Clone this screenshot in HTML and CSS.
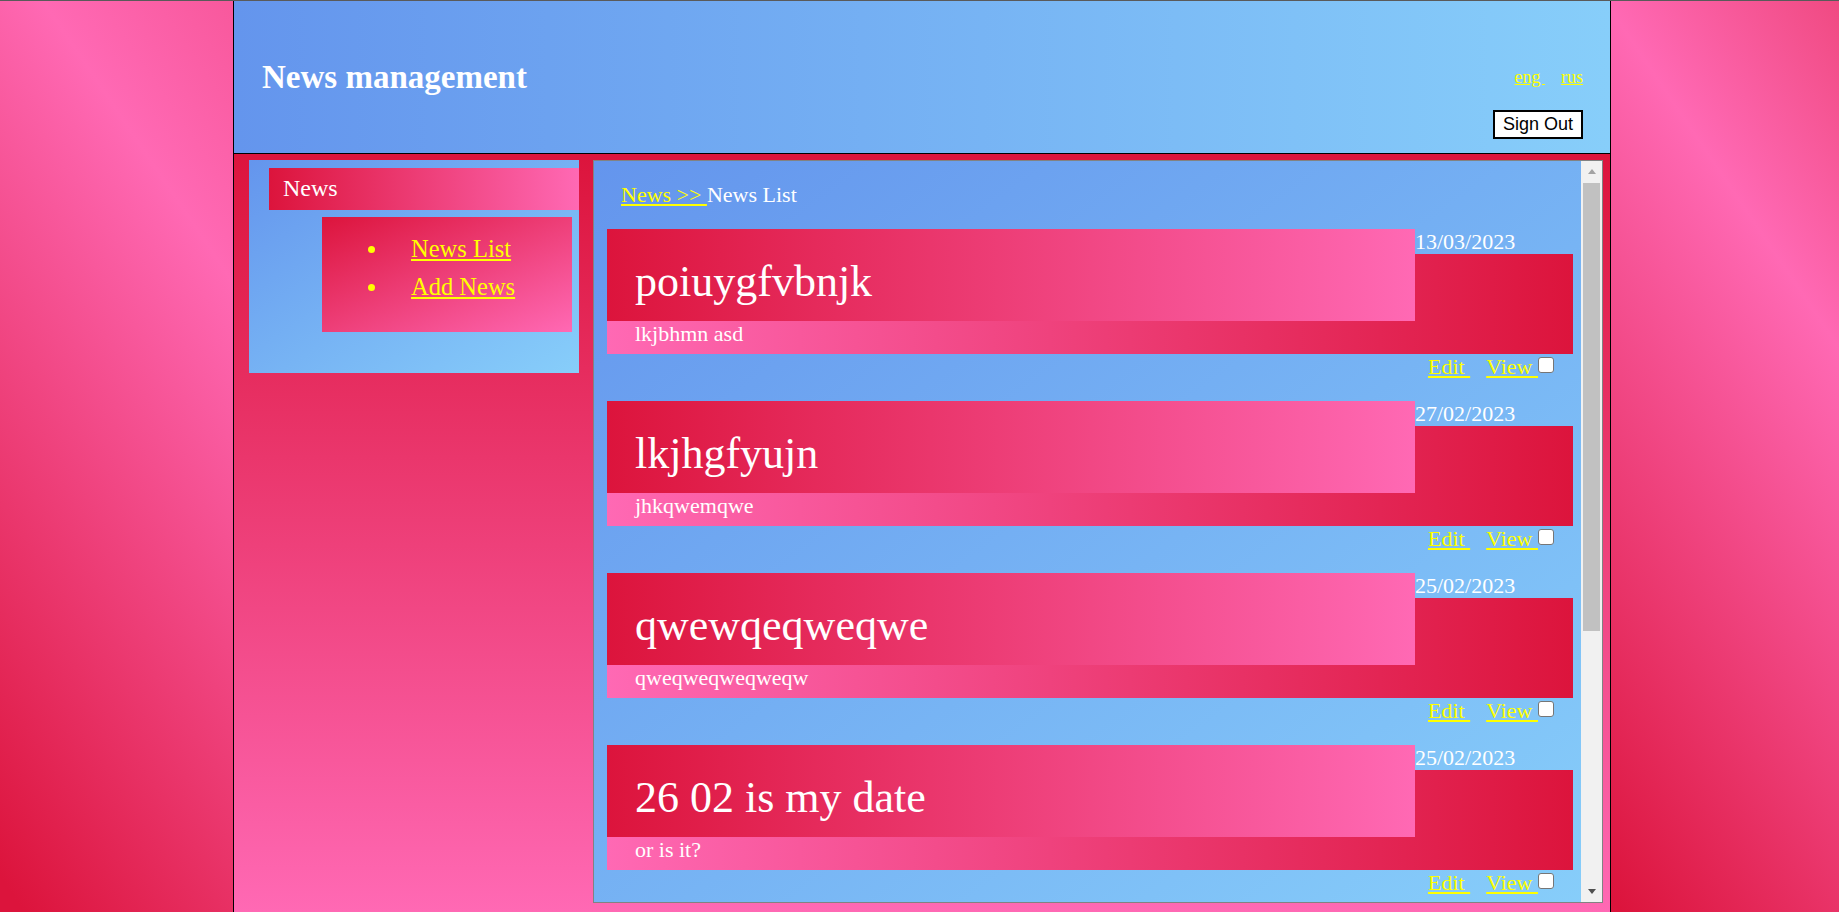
FILE: index.html
```html
<!DOCTYPE html>
<html lang="en">
<head>
<meta charset="utf-8">
<title>News management</title>
<link rel="stylesheet" href="styles.css">
</head>
<body>
<div class="page">
  <header class="header">
    <h1 class="brand">News management</h1>
    <div class="header-tools">
      <nav class="lang"><a href="#">eng&nbsp;</a><a href="#">rus</a></nav>
      <button class="signout" type="button">Sign Out</button>
    </div>
  </header>
  <div class="main">
    <aside class="sidebar">
      <div class="side-title">News</div>
      <ul class="side-menu">
        <li><a href="#">News List</a></li>
        <li><a href="#">Add News</a></li>
      </ul>
    </aside>
    <section class="frame">
      <div class="frame-content">
        <div class="crumbs"><a href="#">News &gt;&gt; </a>News List</div>

        <article class="item">
          <div class="item-card">
            <div class="item-head">
              <div class="item-title"><h2>poiuygfvbnjk</h2></div>
              <div class="item-date">13/03/2023</div>
            </div>
            <p class="item-desc">lkjbhmn asd</p>
          </div>
          <div class="item-actions"><a href="#">Edit&nbsp;</a><a class="view" href="#">View&nbsp;</a><input class="check" type="checkbox"></div>
        </article>

        <article class="item">
          <div class="item-card">
            <div class="item-head">
              <div class="item-title"><h2>lkjhgfyujn</h2></div>
              <div class="item-date">27/02/2023</div>
            </div>
            <p class="item-desc">jhkqwemqwe</p>
          </div>
          <div class="item-actions"><a href="#">Edit&nbsp;</a><a class="view" href="#">View&nbsp;</a><input class="check" type="checkbox"></div>
        </article>

        <article class="item">
          <div class="item-card">
            <div class="item-head">
              <div class="item-title"><h2>qwewqeqweqwe</h2></div>
              <div class="item-date">25/02/2023</div>
            </div>
            <p class="item-desc">qweqweqweqweqw</p>
          </div>
          <div class="item-actions"><a href="#">Edit&nbsp;</a><a class="view" href="#">View&nbsp;</a><input class="check" type="checkbox"></div>
        </article>

        <article class="item">
          <div class="item-card">
            <div class="item-head">
              <div class="item-title"><h2>26 02 is my date</h2></div>
              <div class="item-date">25/02/2023</div>
            </div>
            <p class="item-desc">or is it?</p>
          </div>
          <div class="item-actions"><a href="#">Edit&nbsp;</a><a class="view" href="#">View&nbsp;</a><input class="check" type="checkbox"></div>
        </article>
      </div>
      <div class="scrollbar">
        <div class="sb-btn"><span class="arrow-up"></span></div>
        <div class="sb-track"><div class="sb-thumb"></div></div>
        <div class="sb-btn"><span class="arrow-down"></span></div>
      </div>
    </section>
  </div>
</div>
</body>
</html>
```
FILE: styles.css
```css
html {
  height: 100%;
  background: linear-gradient(56deg, #dc143c 20px, #ff69b4 545px, #dc143c 1344px, #ff69b4 1840px, #f04a82 2034px);
}

body {
  margin: 0;
  height: 100%;
  box-sizing: border-box;
  border-top: 1px solid #5a5a5a;
  overflow: hidden;
  font-family: "Liberation Serif", "Times New Roman", serif;
  color: #fff;
}

a {
  color: #ffff00;
  text-decoration: underline;
}

.page {
  margin-left: 233px;
  width: 1376px;
  height: 100%;
  border-left: 1px solid #000;
  border-right: 1px solid #000;
  display: flex;
  flex-direction: column;
}

/* Header */
.header {
  flex: none;
  height: 152px;
  border-bottom: 1px solid #000;
  padding: 0 27px 0 28px;
  display: flex;
  align-items: center;
  justify-content: space-between;
  background: linear-gradient(to right, #6495ed, #87cefa);
}

.brand {
  margin: 0;
  font-size: 33px;
  font-weight: bold;
  line-height: 38px;
  color: #fff;
}

.header-tools {
  align-self: flex-start;
  margin-top: 66px;
  display: flex;
  flex-direction: column;
  align-items: flex-end;
}

.lang {
  font-size: 18px;
  line-height: 21px;
}

.lang a + a {
  margin-left: 16px;
}

.signout {
  margin-top: 22px;
  font-family: "Liberation Sans", Arial, sans-serif;
  font-size: 18px;
  line-height: 21px;
  padding: 2px 8px;
  border: 2px solid #000;
  border-radius: 0;
  background: #fff;
  color: #000;
}

/* Main area */
.main {
  flex: 1;
  display: flex;
  align-items: flex-start;
  gap: 14px;
  padding: 6px 7px 0 15px;
  background: linear-gradient(to bottom, #dc143c, #ff69b4);
}

.sidebar {
  flex: none;
  width: 330px;
  box-sizing: border-box;
  padding: 8px 0 41px 20px;
  background: linear-gradient(to bottom right, #6495ed, #87cefa);
}

.side-title {
  font-size: 24px;
  line-height: 28px;
  padding: 6px 14px 8px;
  background: linear-gradient(to right, #dc143c, #ff69b4);
}

.side-menu {
  list-style: none;
  margin: 7px 7px 0 53px;
  padding: 13px 0 26px;
  background: linear-gradient(to bottom right, #dc143c, #ff69b4);
}

.side-menu li {
  display: flex;
  align-items: center;
  padding-left: 46px;
  line-height: 38px;
  font-size: 24.5px;
}

.side-menu li::before {
  content: "";
  width: 7px;
  height: 7px;
  border-radius: 50%;
  background: #ffff00;
  margin-right: 36px;
  flex: none;
}

/* Content frame */
.frame {
  flex: none;
  width: 1010px;
  height: 743px;
  box-sizing: border-box;
  border: 1px solid #828282;
  display: flex;
  background: linear-gradient(to bottom right, #6495ed, #87cefa);
}

.frame-content {
  flex: 1;
  overflow: hidden;
  padding: 21px 8px 0 13px;
  font-size: 22px;
  line-height: 25px;
}

.crumbs {
  padding-left: 14px;
  margin-bottom: 21.5px;
}

.item {
  margin-bottom: 21.5px;
}

.item-card {
  background: linear-gradient(to right, #ff69b4, #dc143c) 0 25px / 100% calc(100% - 25px) no-repeat;
}

.item-head {
  display: flex;
}

.item-title {
  flex: none;
  width: 808px;
  box-sizing: border-box;
  padding: 28px 28px 14.5px;
  background: linear-gradient(to right, #dc143c, #ff69b4);
}

.item-title h2 {
  margin: 0;
  font-size: 44px;
  font-weight: normal;
  line-height: 50px;
}

.item-date {
  flex: 1;
}

.item-desc {
  margin: 0;
  padding: 0 28px 8px;
}

.item-actions {
  display: flex;
  justify-content: flex-end;
  align-items: flex-start;
  padding-right: 19px;
}

.item-actions .view {
  margin-left: 16px;
}

.check {
  -webkit-appearance: none;
  appearance: none;
  width: 16px;
  height: 16px;
  margin: 3px 0 0;
  box-sizing: border-box;
  border: 1px solid #767676;
  border-radius: 3px;
  background: #fff;
}

/* Scrollbar */
.scrollbar {
  flex: none;
  width: 21px;
  display: flex;
  flex-direction: column;
  background: #f1f1f1;
}

.sb-btn {
  height: 21px;
  display: flex;
  align-items: center;
  justify-content: center;
  flex: none;
}

.arrow-up {
  width: 0;
  height: 0;
  border-left: 4.5px solid transparent;
  border-right: 4.5px solid transparent;
  border-bottom: 5px solid #a3a3a3;
}

.arrow-down {
  width: 0;
  height: 0;
  border-left: 4.5px solid transparent;
  border-right: 4.5px solid transparent;
  border-top: 5px solid #505050;
}

.sb-track {
  flex: 1;
  padding: 1px 2px 0;
}

.sb-thumb {
  height: 448px;
  background: #c1c1c1;
}
```
